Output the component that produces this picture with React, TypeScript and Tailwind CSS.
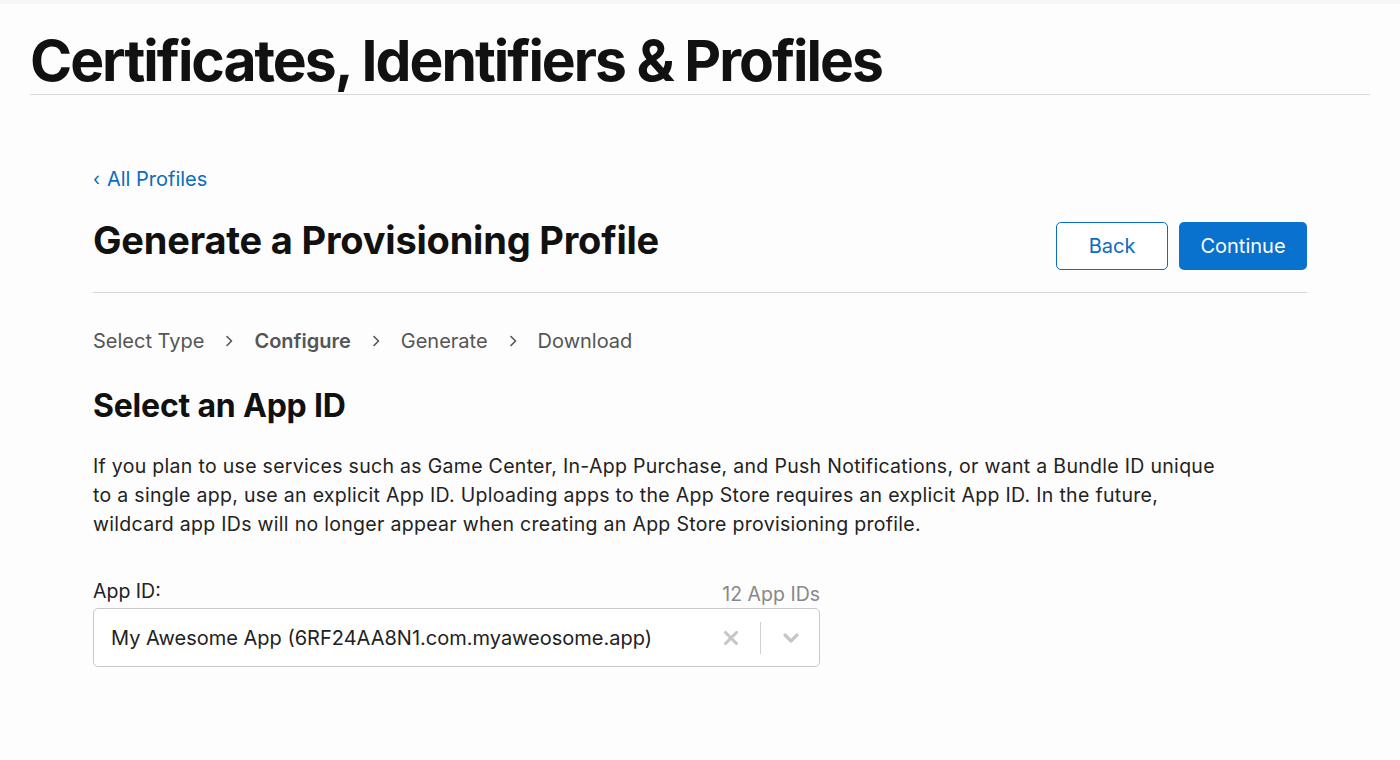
import { ChevronDown, X } from 'lucide-react';

const steps = [
  { label: 'Select Type', active: false },
  { label: 'Configure', active: true },
  { label: 'Generate', active: false },
  { label: 'Download', active: false },
];

function StepArrow() {
  return (
    <svg width="10" height="14" viewBox="0 0 10 14" className="mx-[20px]">
      <path d="M3 2.5 L7.5 7 L3 11.5" fill="none" stroke="#555" strokeWidth="1.6" strokeLinecap="round" strokeLinejoin="round" />
    </svg>
  );
}

export default function App() {
  return (
    <div className="min-h-[760px] bg-[#fdfdfd] font-['Inter',sans-serif] text-[#1d1d1f]">
      <div className="h-[4px] bg-[#f6f6f6]" />
      <header className="px-[30px]">
        <h1 className="pt-[27px] pb-[3px] text-[57px] font-bold leading-[60px] tracking-[-2px] text-[#111]">
          Certificates, Identifiers &amp; Profiles
        </h1>
        <div className="h-px bg-[#d8d8d8]" />
      </header>

      <main className="px-[93px] pt-[71px]">
        <a className="flex items-center gap-[7px] text-[20px] leading-[26px] text-[#0a6cc2]">
          <span className="text-[18px]">‹</span>
          <span>All Profiles</span>
        </a>

        <div className="mt-[16px] flex items-start justify-between pb-[22px]">
          <h2 className="pt-[10px] text-[38px] font-bold leading-[44px] tracking-[-0.2px] text-[#111]">
            Generate a Provisioning Profile
          </h2>
          <div className="mt-[14px] flex gap-[11px]">
            <button className="h-[48px] w-[112px] rounded-[5px] border border-[#0a6cc2] bg-white text-[20px] text-[#0a6cc2]">
              Back
            </button>
            <button className="h-[48px] w-[128px] rounded-[5px] bg-[#0971ce] text-[20px] text-white">
              Continue
            </button>
          </div>
        </div>
        <div className="h-px bg-[#d6d6d6]" />

        <nav className="mt-[35px] flex items-center text-[20px] leading-[26px] text-[#555]">
          {steps.map((s, i) => (
            <div key={s.label} className="flex items-center">
              {i > 0 && <StepArrow />}
              <span className={s.active ? 'font-semibold text-[#555]' : ''}>{s.label}</span>
            </div>
          ))}
        </nav>

        <h3 className="mt-[32px] text-[32px] font-bold leading-[40px] tracking-[-0.2px] text-[#111]">
          Select an App ID
        </h3>

        <p className="mt-[26px] max-w-[1135px] text-[19.5px] leading-[29px] tracking-[0.3px] text-[#222]">
          If you plan to use services such as Game Center, In-App Purchase, and Push Notifications, or want a Bundle ID unique
          to a single app, use an explicit App ID. Uploading apps to the App Store requires an explicit App ID. In the future,
          wildcard app IDs will no longer appear when creating an App Store provisioning profile.
        </p>

        <div className="mt-[40px] w-[727px]">
          <div className="flex items-end justify-between">
            <span className="text-[19.5px] leading-[24px] text-[#222]">App ID:</span>
            <span className="translate-y-[3px] text-[19.5px] leading-[24px] text-[#888]">12 App IDs</span>
          </div>
          <div className="mt-[5px] flex h-[59px] items-center rounded-[5px] border border-[#c8c8c8] bg-white pl-[17px] pr-[16px]">
            <span className="flex-1 text-[20px] text-[#222]">My Awesome App (6RF24AA8N1.com.myaweosome.app)</span>
            <X size={22} strokeWidth={3.4} className="text-[#c6c6c6]" />
            <div className="mx-[18px] h-[32px] w-px bg-[#d0d0d0]" />
            <ChevronDown size={24} strokeWidth={3.2} className="text-[#c6c6c6]" />
          </div>
        </div>
      </main>
    </div>
  );
}
